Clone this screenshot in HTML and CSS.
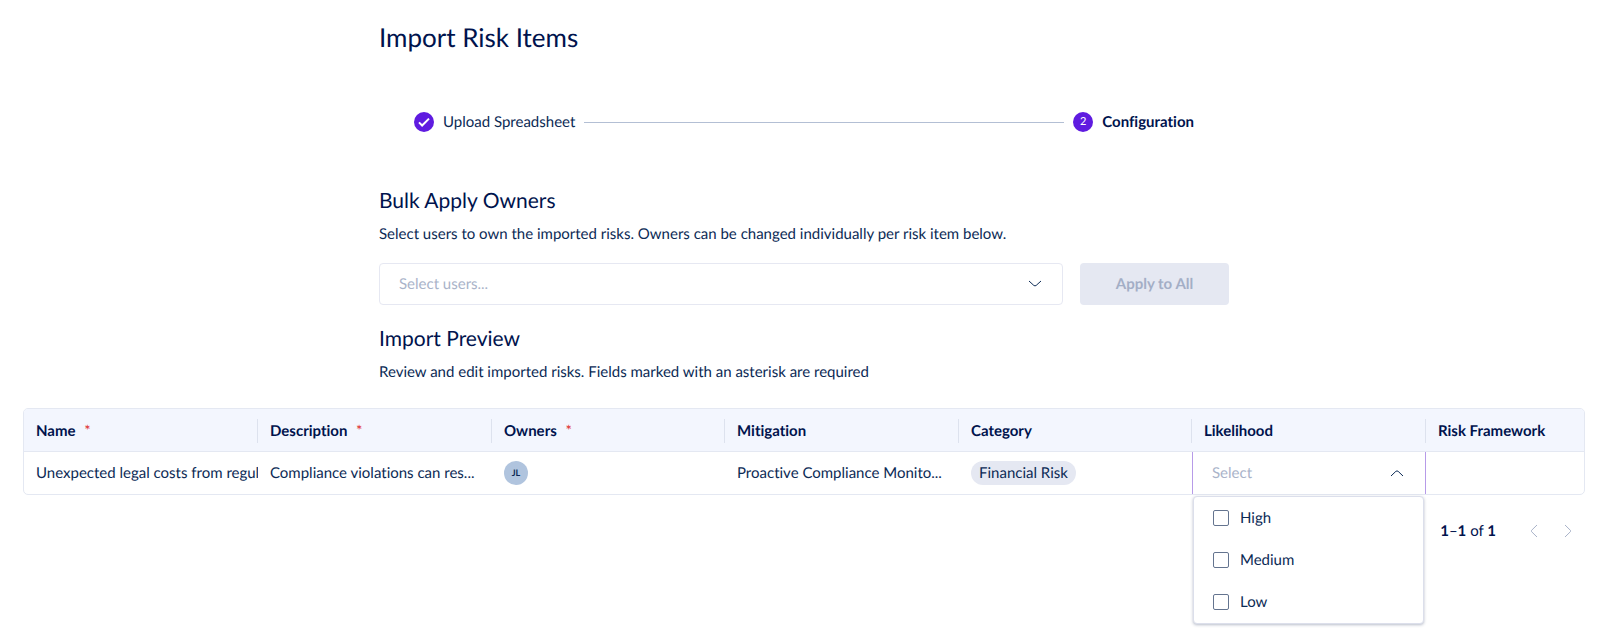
FILE: index.html
```html
<!DOCTYPE html>
<html lang="en">
<head>
    <meta charset="utf-8">
    <title>Import Risk Items</title>
    <link rel="stylesheet" href="styles.css">
</head>
<body>

    <main class="page">
        <div class="content">
            <h1>Import Risk Items</h1>

            <ol class="stepper">
                <li class="step">
                    <span class="step-icon">
                        <svg width="20" height="20" viewBox="0 0 20 20"><path d="M5 10.4l3.1 3.1L15 6.6"/></svg>
                    </span>
                    Upload Spreadsheet
                </li>
                <li class="step-line" role="presentation"></li>
                <li class="step active" aria-current="step">
                    <span class="step-icon">2</span>
                    Configuration
                </li>
            </ol>

            <section>
                <h2>Bulk Apply Owners</h2>
                <p>Select users to own the imported risks. Owners can be changed individually per risk item below.</p>
                <form class="owners-form">
                    <div class="select-box">
                        <select id="bulkOwners" aria-label="Owners">
                            <option value="">Select users...</option>
                        </select>
                        <svg class="chevron" width="14" height="8" viewBox="0 0 14 8"><path d="M1 1l4.8 4.4q1.2 1 2.4 0L13 1"/></svg>
                    </div>
                    <button type="submit" class="apply" disabled>Apply to All</button>
                </form>
            </section>

            <section>
                <h2>Import Preview</h2>
                <p>Review and edit imported risks. Fields marked with an asterisk are required</p>
            </section>
        </div>

        <table class="preview">
            <colgroup>
                <col class="col-wide">
                <col class="col-wide">
                <col class="col">
                <col class="col-wide">
                <col class="col">
                <col class="col-wide">
                <col>
            </colgroup>
            <thead>
                <tr>
                    <th><div class="head">Name <span class="required">*</span></div></th>
                    <th><div class="head">Description <span class="required">*</span></div></th>
                    <th><div class="head">Owners <span class="required">*</span></div></th>
                    <th><div class="head">Mitigation</div></th>
                    <th><div class="head">Category</div></th>
                    <th><div class="head">Likelihood</div></th>
                    <th><div class="head">Risk Framework</div></th>
                </tr>
            </thead>
            <tbody>
                <tr>
                    <td class="clip">Unexpected legal costs from regula</td>
                    <td>Compliance violations can res...</td>
                    <td><span class="avatar">JL</span></td>
                    <td>Proactive Compliance Monito...</td>
                    <td><span class="tag">Financial Risk</span></td>
                    <td class="editing">
                        <div class="select-box">
                            <select id="likelihood" aria-label="Likelihood">
                                <option value="">Select</option>
                            </select>
                            <svg class="chevron" width="14" height="8" viewBox="0 0 14 8"><path d="M1 7l4.8-4.6q1.2-1 2.4 0L13 7"/></svg>
                        </div>
                        <div class="menu">
                            <label><input type="checkbox" name="likelihood" value="high"> High</label>
                            <label><input type="checkbox" name="likelihood" value="medium"> Medium</label>
                            <label><input type="checkbox" name="likelihood" value="low"> Low</label>
                        </div>
                    </td>
                    <td></td>
                </tr>
            </tbody>
        </table>

        <nav class="pagination" aria-label="Pagination">
            <span><b>1</b>–<b>1</b> of <b>1</b></span>
            <button type="button" aria-label="Previous page" disabled>
                <svg width="8" height="14" viewBox="0 0 8 14"><path d="M7 1L1.6 6.3q-.7.7 0 1.4L7 13"/></svg>
            </button>
            <button type="button" aria-label="Next page" disabled>
                <svg width="8" height="14" viewBox="0 0 8 14"><path d="M1 1l5.4 5.3q.7.7 0 1.4L1 13"/></svg>
            </button>
        </nav>
    </main>

</body>
</html>
```

FILE: styles.css
```css
* {
    box-sizing: border-box;
}
body {
    margin: 0;
    background-color: #fff;
    color: #0b2a55;
    font-family: Lato, "Liberation Sans", sans-serif;
    font-size: 15px;
    font-variant-ligatures: none;
    line-height: 24px;
    text-rendering: geometricPrecision;
}
.page {
    min-height: 100vh;
    padding: 21px 15px 0 23px;
}
.content {
    max-width: 850px;
    margin: 0 auto;
}
h1, h2 {
    margin: 0;
    color: #00134d;
    font-weight: 400;
}
h1 {
    font-size: 26px;
    line-height: 32px;
}
h2 {
    font-size: 21px;
    line-height: 32px;
}
p {
    margin: 5px 0 17px;
}
svg {
    fill: none;
    stroke: currentColor;
}
select, button, input {
    margin: 0;
    font: inherit;
    text-rendering: inherit;
}

/* Stepper */
.stepper {
    display: flex;
    align-items: center;
    gap: 9px;
    list-style: none;
    margin: 57px 35px 51px;
    padding: 0;
}
.step {
    display: flex;
    align-items: center;
    gap: 9px;
}
.step.active {
    color: #00134d;
    font-weight: 700;
}
.step-icon {
    display: flex;
    align-items: center;
    justify-content: center;
    width: 20px;
    height: 20px;
    border-radius: 50%;
    background-color: #5f1be0;
    color: #fff;
    font-size: 11px;
    font-weight: 400;
}
.step-icon svg {
    stroke-width: 2;
}
.step-line {
    flex: 1;
    height: 1px;
    background-color: #b3bfd4;
}

/* Bulk owners */
.owners-form {
    display: flex;
    gap: 17px;
    margin-bottom: 18px;
}
.select-box {
    display: grid;
    flex: 1;
    align-items: center;
}
.select-box select, .chevron {
    grid-area: 1 / 1;
}
.select-box select {
    appearance: none;
    width: 100%;
    height: 42px;
    padding: 0 19px;
    border: 1px solid #e6e8f2;
    border-radius: 4px;
    background-color: #fff;
    color: #a9b3c9;
}
.chevron {
    justify-self: end;
    margin-right: 21px;
    pointer-events: none;
}
.apply {
    width: 149px;
    height: 42px;
    border: none;
    border-radius: 4px;
    background-color: #e5e8f2;
    color: #a3aec6;
    font-weight: 700;
}

/* Preview table */
.preview {
    width: 100%;
    margin-top: 24px;
    table-layout: fixed;
    border: 1px solid #e4e8f2;
    border-radius: 5px;
    border-spacing: 0;
}
.col {
    width: 233px;
}
.col-wide {
    width: 234px;
}
th {
    height: 43px;
    padding: 1px 0 0;
    border-bottom: 1px solid #e4e8f2;
    background-color: #f3f6fe;
    color: #00134d;
    text-align: left;
}
th:first-child {
    border-top-left-radius: 4px;
}
th:last-child {
    border-top-right-radius: 4px;
}
.head {
    padding-left: 12px;
    border-right: 1px solid #dde2ee;
}
th:last-child .head {
    border-right: none;
}
.required {
    margin-left: 5px;
    color: #e03535;
    font-weight: 400;
}
td {
    height: 42px;
    padding: 0 0 0 12px;
    white-space: nowrap;
}
.clip {
    overflow: hidden;
}
.avatar {
    display: flex;
    align-items: center;
    justify-content: center;
    width: 24px;
    height: 24px;
    border-radius: 50%;
    background-color: #b0c4de;
    font-size: 9px;
    font-weight: 700;
}
.tag {
    display: inline-block;
    padding: 0 8px;
    border-radius: 13px;
    background-color: #e5e8f2;
}
.editing {
    position: relative;
    padding: 0;
    border: solid #b79be8;
    border-width: 0 1px;
}
.editing select {
    border: none;
    background: none;
}

/* Options drop over the page below the cell */
.menu {
    position: absolute;
    top: 100%;
    left: 0;
    right: 1px;
    margin-top: 2px;
    border: 1px solid #dcdfeb;
    border-radius: 4px;
    background-color: #fff;
    box-shadow: 0 1px 3px rgba(20, 35, 80, 0.3);
}
.menu label {
    display: flex;
    align-items: center;
    gap: 11px;
    height: 42px;
    padding-left: 19px;
}
.menu input {
    appearance: none;
    width: 16px;
    height: 16px;
    border: 1px solid #64748f;
    border-radius: 2px;
    background-color: #fff;
}
.menu input:checked {
    background-color: #5f1be0;
}

.pagination {
    display: flex;
    align-items: center;
    justify-content: flex-end;
    gap: 14px;
    margin-top: 24px;
    padding-right: 7px;
    color: #00134d;
}
.pagination span {
    margin-right: 14px;
}
.pagination button {
    display: flex;
    align-items: center;
    justify-content: center;
    width: 20px;
    height: 24px;
    padding: 0;
    border: none;
    background: none;
    color: #a9b3c9;
}
```
